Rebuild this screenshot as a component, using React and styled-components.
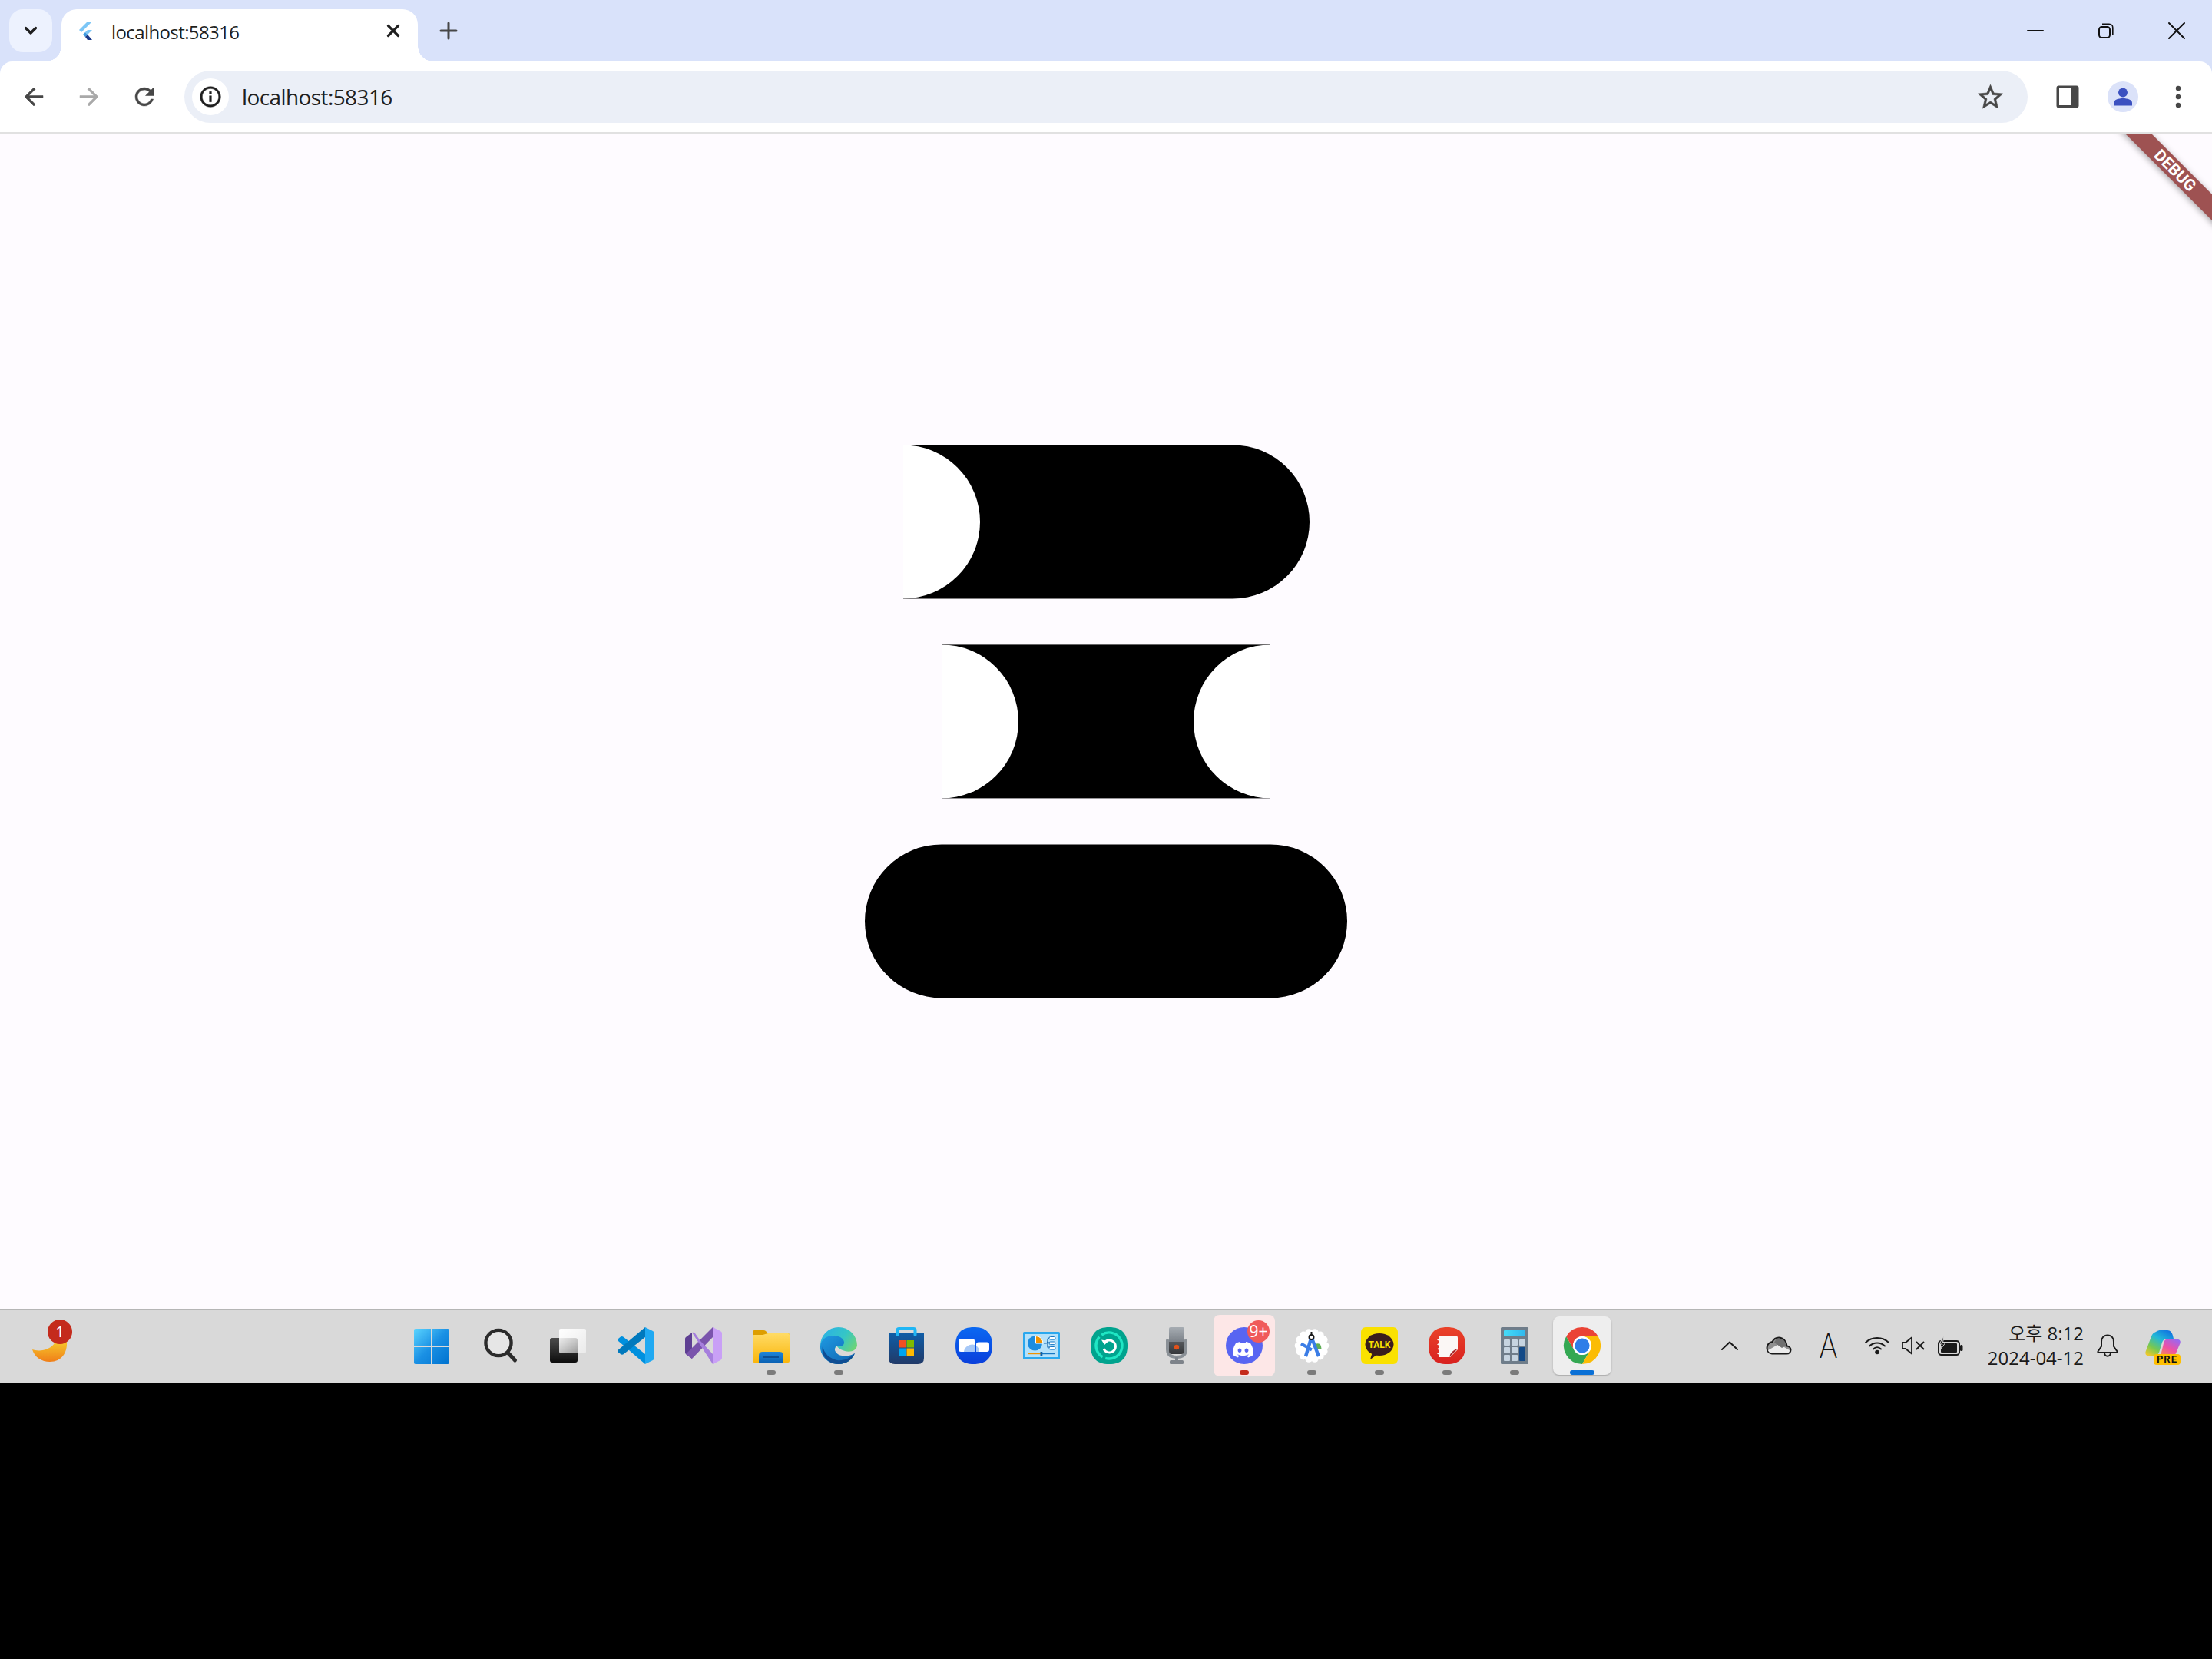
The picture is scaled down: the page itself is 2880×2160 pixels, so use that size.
import React from "react";
import styled, { createGlobalStyle } from "styled-components";

const uiFont = `"Open Sans", "Noto Sans", "Noto Sans CJK KR", sans-serif`;

const GlobalStyle = createGlobalStyle`
  html, body {
    margin: 0;
    padding: 0;
    background: #000;
    font-family: ${uiFont};
  }
`;

const Page = styled.div`
  width: 2880px;
  height: 2160px;
  display: flex;
  flex-direction: column;
  background: #000;
  overflow: hidden;
`;

const Frame = styled.header`
  flex: none;
  background: #d9e2fa;
`;

const TabStrip = styled.div`
  height: 80px;
  display: flex;
  padding-left: 12px;
`;

const TabSearch = styled.div`
  width: 56px;
  height: 56px;
  margin-top: 12px;
  border-radius: 18px;
  background: #edf2fe;
  display: flex;
  align-items: center;
  justify-content: center;
`;

const Tab = styled.div`
  position: relative;
  width: 464px;
  height: 68px;
  margin: 12px 0 0 12px;
  padding: 0 23px 12px 20px;
  box-sizing: border-box;
  display: flex;
  align-items: center;
  background: #fff;
  border-radius: 20px 20px 0 0;

  &::before,
  &::after {
    content: "";
    position: absolute;
    bottom: 0;
    width: 20px;
    height: 20px;
  }
  &::before {
    left: -20px;
    background: radial-gradient(circle at 0 0, transparent 19.5px, #fff 20px);
  }
  &::after {
    right: -20px;
    background: radial-gradient(circle at 100% 0, transparent 19.5px, #fff 20px);
  }
`;

const TabTitle = styled.span`
  flex: 1;
  margin: 3px 0 0 21px;
  font-size: 24px;
  line-height: 32px;
  letter-spacing: -0.6px;
  color: #1f1f1f;
  white-space: nowrap;
`;

const NewTab = styled.div`
  width: 56px;
  height: 56px;
  margin: 12px 0 0 12px;
  display: flex;
  align-items: center;
  justify-content: center;
`;

const WindowButtons = styled.div`
  margin-left: auto;
  display: flex;
  align-items: center;
`;

const WindowButton = styled.div`
  width: 92px;
  height: 80px;
  display: flex;
  align-items: center;
  justify-content: center;
`;

const Toolbar = styled.div`
  height: 94px;
  box-sizing: border-box;
  display: flex;
  align-items: flex-start;
  padding: 12px 8px 0;
  background: #fff;
  border-bottom: 2px solid #e1e1e1;
  border-radius: 16px 16px 0 0;
`;

const ToolButton = styled.div`
  width: 72px;
  height: 68px;
  flex: none;
  display: flex;
  align-items: center;
  justify-content: center;
`;

const Omnibox = styled.div`
  width: 2400px;
  height: 68px;
  flex: none;
  margin: 0 16px;
  padding: 0 29px 0 10px;
  box-sizing: border-box;
  display: flex;
  align-items: center;
  background: #ebeff7;
  border-radius: 34px;
`;

const InfoChip = styled.div`
  width: 48px;
  height: 48px;
  border-radius: 24px;
  background: #fff;
  display: flex;
  align-items: center;
  justify-content: center;
`;

const Url = styled.span`
  flex: 1;
  margin-left: 17px;
  font-size: 28px;
  line-height: 36px;
  letter-spacing: -0.6px;
  color: #1f1f1f;
`;

const Avatar = styled.div`
  width: 40px;
  height: 40px;
  border-radius: 50%;
  background: #dbe2f9;
  display: flex;
  align-items: center;
  justify-content: center;
`;

const Content = styled.main`
  position: relative;
  height: 1530px;
  flex: none;
  display: flex;
  flex-direction: column;
  align-items: center;
  justify-content: center;
  gap: 60px;
  background: #fefbff;
  overflow: hidden;
`;

const Shape = styled.div`
  position: relative;
  width: ${(p) => p.$width}px;
  height: 200px;
  background: #000;
  border-radius: ${(p) => p.$radius};
  overflow: hidden;
  transform: translateY(0.4px);
`;

const Notch = styled.div`
  position: absolute;
  top: 0;
  ${(p) => p.$side}: 0;
  width: 100px;
  height: 200px;
  background: #fff;
  border-radius: ${(p) => (p.$side === "left" ? "0 100px 100px 0" : "100px 0 0 100px")};
`;

const BannerClip = styled.div`
  position: absolute;
  top: 0;
  right: 0;
  width: 140px;
  height: 140px;
  overflow: hidden;
`;

const Banner = styled.div`
  position: absolute;
  left: -18px;
  top: 36px;
  width: 220px;
  height: 24px;
  display: flex;
  align-items: center;
  justify-content: center;
  transform: rotate(45deg);
  background: #9e5252;
  box-shadow: 0 2px 8px rgba(0, 0, 0, 0.35);
  color: #fff;
  font-family: Roboto, sans-serif;
  font-weight: 700;
  font-size: 21px;
  line-height: 24px;
`;

const Taskbar = styled.footer`
  position: relative;
  height: 96px;
  flex: none;
  box-sizing: border-box;
  display: flex;
  background: #d9d9d9;
  border-top: 2px solid #b5b5b5;
`;

const Weather = styled.div`
  position: relative;
  width: 518px;
  flex: none;
  padding: 41px 0 0 42px;
  box-sizing: border-box;
`;

const CountBadge = styled.span`
  position: absolute;
  left: ${(p) => p.$left}px;
  top: ${(p) => p.$top}px;
  width: ${(p) => p.$size}px;
  height: ${(p) => p.$size}px;
  border-radius: 50%;
  background: ${(p) => p.$color};
  color: #fff;
  font-size: ${(p) => p.$font}px;
  line-height: ${(p) => p.$size}px;
  text-align: center;
`;

const Apps = styled.div`
  display: flex;
  flex: none;
`;

const AppSlot = styled.div`
  width: 88px;
  margin-left: ${(p) => (p.$nudge ? 2 : 0)}px;
  display: flex;
  justify-content: center;
`;

const Tile = styled.div`
  position: relative;
  box-sizing: border-box;
  width: ${(p) => (p.$tone === "active" ? 76 : 80)}px;
  height: ${(p) => (p.$tone === "active" ? 76 : 80)}px;
  margin-top: ${(p) => (p.$tone === "active" ? 8 : 6)}px;
  padding-top: ${(p) => (p.$tone === "active" ? 14 : 16)}px;
  display: flex;
  flex-direction: column;
  align-items: center;
  gap: 8px;
  border-radius: 8px;
  background: ${(p) =>
    p.$tone === "active" ? "#eeeeee" : p.$tone === "alert" ? "#fde7e7" : "transparent"};
  box-shadow: ${(p) => (p.$tone === "active" ? "0 1px 2px rgba(0,0,0,0.25)" : "none")};
`;

const RunDot = styled.span`
  flex: none;
  width: ${(p) => (p.$wide ? 32 : 12)}px;
  height: 6px;
  border-radius: 3px;
  background: ${(p) => p.$color};
`;

const Glyph = styled.svg`
  display: block;
  flex: none;
  overflow: visible;
`;

const Tray = styled.div`
  display: flex;
  align-items: center;
  margin-left: 116px;
  height: 92px;
`;

const TraySlot = styled.div`
  width: ${(p) => p.$width}px;
  display: flex;
  justify-content: center;
  align-items: center;
  flex: none;
`;

const ImeLetter = styled.span`
  display: inline-block;
  font-family: Inter, sans-serif;
  font-weight: 200;
  font-size: 44px;
  line-height: 44px;
  color: #111;
  transform: scaleX(0.85);
`;

const Clock = styled.div`
  width: 139px;
  flex: none;
  text-align: right;
  font-size: 24px;
  line-height: 32px;
  color: #1a1a1a;
  white-space: nowrap;
`;

const Copilot = styled.div`
  position: relative;
  width: 46px;
  height: 45px;
  flex: none;
  margin: 5px 0 0 18px;
`;

const PreBadge = styled.span`
  position: absolute;
  right: 0;
  bottom: 0;
  width: 35px;
  height: 14px;
  border-radius: 4px;
  background: #ffbf00;
  color: #111;
  font-family: Roboto, sans-serif;
  font-weight: 700;
  font-size: 13px;
  line-height: 14px;
  letter-spacing: 1px;
  text-align: center;
`;

const squircle = "M24 0C40 0 48 8 48 24C48 40 40 48 24 48C8 48 0 40 0 24C0 8 8 0 24 0Z";

const Mat = ({ d, size, color }) => (
  <Glyph width={size} height={size} viewBox="0 0 24 24">
    <path d={d} fill={color} stroke={color} strokeWidth="0.35" />
  </Glyph>
);

const Line = ({ w, h, color, sw, d }) => (
  <Glyph width={w} height={h} viewBox={`0 0 ${w} ${h}`}>
    <path d={d} fill="none" stroke={color} strokeWidth={sw} strokeLinecap="round" strokeLinejoin="round" />
  </Glyph>
);

const Favicon = () => (
  <Glyph width="24" height="24" viewBox="0 0 24 24">
    <path d="M14 0h6L6 14l-3-3z" fill="#7cc6f6" />
    <path d="M14 11h6l-6 6-3-3z" fill="#7cc6f6" />
    <path d="M8 17l3-3 3 3-3 3z" fill="#3f9be0" />
    <path d="M11 20l3-3 6 7h-6z" fill="#1a3a8a" />
  </Glyph>
);

const chromeIcons = {
  back: "M20 11H7.83l5.59-5.59L12 4l-8 8 8 8 1.41-1.41L7.83 13H20v-2z",
  forward: "M12 4l-1.41 1.41L16.17 11H4v2h12.17l-5.58 5.59L12 20l8-8z",
  reload:
    "M17.65 6.35A7.95 7.95 0 0 0 12 4a8 8 0 1 0 7.73 10h-2.08A6 6 0 1 1 12 6c1.66 0 3.14.69 4.22 1.78L13 11h7V4l-2.35 2.35z",
  info: "M11 7h2v2h-2zm0 4h2v6h-2zm1-9C6.48 2 2 6.48 2 12s4.48 10 10 10 10-4.48 10-10S17.52 2 12 2zm0 18c-4.41 0-8-3.59-8-8s3.59-8 8-8 8 3.59 8 8-3.59 8-8 8z",
  star: "M22 9.24l-7.19-.62L12 2 9.19 8.63 2 9.24l5.46 4.73L5.82 21 12 17.27 18.18 21l-1.63-7.03L22 9.24zM12 15.4l-3.76 2.27 1-4.28-3.32-2.88 4.38-.38L12 6.1l1.71 4.04 4.38.38-3.32 2.88 1 4.28L12 15.4z",
};

const SidePanelIcon = () => (
  <Glyph width="30" height="30" viewBox="0 0 30 30">
    <rect x="0.5" y="0.5" width="29" height="29" rx="3" fill="#474747" />
    <rect x="4" y="4" width="15" height="22" fill="#fff" />
  </Glyph>
);

const PersonIcon = () => (
  <Glyph width="26" height="26" viewBox="0 0 26 26">
    <circle cx="13" cy="7.5" r="6" fill="#3b50c0" />
    <path d="M1 24.5V21c0-4 6-6 12-6s12 2 12 6v3.5z" fill="#3b50c0" />
  </Glyph>
);

const DotsIcon = () => (
  <Glyph width="8" height="30" viewBox="0 0 8 30">
    <circle cx="4" cy="4" r="3.2" fill="#474747" />
    <circle cx="4" cy="15" r="3.2" fill="#474747" />
    <circle cx="4" cy="26" r="3.2" fill="#474747" />
  </Glyph>
);

const RestoreIcon = () => (
  <Glyph width="20" height="20" viewBox="0 0 20 20">
    <rect x="1" y="5" width="14" height="14" rx="3.5" fill="none" stroke="#111" strokeWidth="2" />
    <path d="M5 1.2h9c2.8 0 4.8 2 4.8 4.8v9" fill="none" stroke="#111" strokeWidth="1.6" />
  </Glyph>
);

const MoonIcon = () => (
  <Glyph width="45" height="26" viewBox="0 0 45 26">
    <defs>
      <linearGradient id="moon" x1="0" y1="0" x2="0" y2="1">
        <stop offset="0" stopColor="#f6c62b" />
        <stop offset="1" stopColor="#f07f19" />
      </linearGradient>
    </defs>
    <path d="M0 10C8 13 24 12 30 0L45 0C46 14 38 26 23 26C12 26 3 20 0 10Z" fill="url(#moon)" />
  </Glyph>
);

const WindowsIcon = () => (
  <Glyph width="48" height="48" viewBox="0 0 48 48">
    <defs>
      <linearGradient id="win" gradientUnits="userSpaceOnUse" x1="1" y1="2" x2="47" y2="48">
        <stop offset="0" stopColor="#5ad4ff" />
        <stop offset="0.5" stopColor="#1a90e4" />
        <stop offset="1" stopColor="#0072cf" />
      </linearGradient>
    </defs>
    <g fill="url(#win)">
      <path d="M3 2H23V24H1V4A2 2 0 0 1 3 2Z" />
      <path d="M25 2H45A2 2 0 0 1 47 4V24H25Z" />
      <path d="M1 26H23V48H3A2 2 0 0 1 1 46Z" />
      <path d="M25 26H47V46A2 2 0 0 1 45 48H25Z" />
    </g>
  </Glyph>
);

const SearchIcon = () => (
  <Glyph width="48" height="48" viewBox="0 0 48 48">
    <circle cx="23" cy="20.5" r="16.6" fill="rgba(255,255,255,0.35)" stroke="#2b2b2b" strokeWidth="4.4" />
    <path d="M35 33L44.5 43" stroke="#2b2b2b" strokeWidth="5" strokeLinecap="round" />
  </Glyph>
);

const TaskViewIcon = () => (
  <Glyph width="48" height="48" viewBox="0 0 48 48">
    <defs>
      <linearGradient id="tvDark" x1="0" y1="0" x2="0" y2="1">
        <stop offset="0" stopColor="#4c4c4c" />
        <stop offset="1" stopColor="#0d0d0d" />
      </linearGradient>
      <linearGradient id="tvLight" x1="0" y1="0" x2="1" y2="1">
        <stop offset="0" stopColor="#ffffff" />
        <stop offset="1" stopColor="#ffffff" stopOpacity="0.45" />
      </linearGradient>
    </defs>
    <rect x="2" y="14" width="36" height="32" rx="3" fill="url(#tvDark)" />
    <rect x="14" y="2" width="35" height="32" rx="2" fill="url(#tvLight)" />
  </Glyph>
);

const CodeIcon = () => (
  <Glyph width="48" height="48" viewBox="0 0 48 48">
    <path d="M1 18Q0 16.5 1 15L4 12.5Q6 11.5 8 13L36 35V48Z" fill="#0090de" />
    <path d="M36 0V13L8 35Q6 36.5 4 35L1 32.5Q0 31 1 29.5Z" fill="#0079bd" />
    <path d="M36 0L46 5Q48 6 48 8V40Q48 42 46 43L36 48Z" fill="#20a9f2" />
  </Glyph>
);

const StudioIcon = () => (
  <Glyph width="48" height="48" viewBox="0 0 48 48">
    <path d="M0 15Q0 14 1 13L9 7V41L1 35Q0 34 0 33Z" fill="#5e3f92" />
    <path d="M36 0V13L9 41L1 35Z" fill="#7a54ac" />
    <path d="M9 7L36 48V35L20 18L13 8Q11 6 9 7Z" fill="#a67fdd" />
    <path d="M36 0L46 5Q48 6 48 8V40Q48 42 46 43L36 48Z" fill="#c9a0f6" />
  </Glyph>
);

const FolderIcon = () => (
  <Glyph width="48" height="48" viewBox="0 0 48 48">
    <defs>
      <linearGradient id="folder" x1="0" y1="0" x2="0" y2="1">
        <stop offset="0" stopColor="#ffdb65" />
        <stop offset="1" stopColor="#fab60c" />
      </linearGradient>
      <linearGradient id="pocket" x1="0" y1="0" x2="0" y2="1">
        <stop offset="0" stopColor="#1f86da" />
        <stop offset="1" stopColor="#0a62b4" />
      </linearGradient>
    </defs>
    <path d="M2 4H14Q16 4 17 5L20 8H46Q48 8 48 10V16H0V6Q0 4 2 4Z" fill="#dd9e00" />
    <path d="M0 11Q0 10 2 10H13L20 8H46Q48 8 48 10V44Q48 46 46 46H2Q0 46 0 44Z" fill="url(#folder)" />
    <path d="M13 32H35Q40 32 40 37V46H8V37Q8 32 13 32Z" fill="url(#pocket)" />
    <path d="M14 39H34" stroke="#0b4f94" strokeWidth="2" />
  </Glyph>
);

const EdgeIcon = () => (
  <Glyph width="48" height="48" viewBox="0 0 48 48">
    <defs>
      <linearGradient id="edgeTop" x1="0" y1="0" x2="1" y2="0.7">
        <stop offset="0" stopColor="#2aaeea" />
        <stop offset="0.55" stopColor="#35c6c6" />
        <stop offset="1" stopColor="#7fd85f" />
      </linearGradient>
      <linearGradient id="edgeBlue" x1="0" y1="0" x2="0.8" y2="1">
        <stop offset="0" stopColor="#1f9ae2" />
        <stop offset="1" stopColor="#0f68b4" />
      </linearGradient>
    </defs>
    <circle cx="24" cy="24" r="24" fill="url(#edgeTop)" />
    <path d="M48 24C47 31 39 33 32 31C28 30 24 28 21 24L18 30L24 40H46L52 34V24Z" fill="#dbd9d7" />
    <path
      d="M0 25C1 15 9 11 17 11C27 11 32 17 31 21C30 25 24 26 21 24C19 26 18 29 20 32C23 37 30 38 37 37C40 36.5 43 35 45 34C41 43 33 48 24 48C10 48 0 38 0 25Z"
      fill="url(#edgeBlue)"
    />
    <path d="M12 45C6 41 1 34 3 25C5 34 12 41 22 43C30 44 38 41 45 34C41 43 33 48 24 48C19 48 15 47 12 45Z" fill="#0f4d93" />
  </Glyph>
);

const StoreIcon = () => (
  <Glyph width="48" height="48" viewBox="0 0 48 48">
    <defs>
      <linearGradient id="bag" x1="0" y1="0" x2="0" y2="1">
        <stop offset="0" stopColor="#0f5ea8" />
        <stop offset="1" stopColor="#213a68" />
      </linearGradient>
    </defs>
    <path d="M1 7H47V40Q47 48 39 48H9Q1 48 1 40Z" fill="url(#bag)" />
    <path d="M12.5 10V4Q12.5 2 14.5 2H33.5Q35.5 2 35.5 4V10" fill="none" stroke="#1fb6f5" strokeWidth="4" strokeLinecap="round" />
    <rect x="14" y="17" width="9.5" height="9.5" fill="#f25022" />
    <rect x="24.5" y="17" width="9.5" height="9.5" fill="#7fba00" />
    <rect x="14" y="27.5" width="9.5" height="9.5" fill="#00a4ef" />
    <rect x="24.5" y="27.5" width="9.5" height="9.5" fill="#ffb900" />
  </Glyph>
);

const MeetIcon = () => (
  <Glyph width="48" height="48" viewBox="0 0 48 48">
    <defs>
      <linearGradient id="meet" x1="0" y1="0" x2="0" y2="1">
        <stop offset="0" stopColor="#0a68f2" />
        <stop offset="1" stopColor="#0a3fdb" />
      </linearGradient>
    </defs>
    <path d={squircle} fill="url(#meet)" />
    <rect x="4" y="15" width="21" height="17" rx="3" fill="#fff" />
    <rect x="27" y="19.5" width="17" height="12.5" rx="3" fill="#fff" />
    <path d="M11 32A11 10 0 0 1 25 23V32Z" fill="#a6c8f7" />
    <path d="M27 24A11 10 0 0 1 31 32H27Z" fill="#a6c8f7" />
  </Glyph>
);

const ControlPanelIcon = () => (
  <Glyph width="48" height="48" viewBox="0 0 48 48">
    <rect x="0" y="6" width="48" height="36" rx="1.5" fill="#2ba8ee" />
    <rect x="3" y="9" width="42" height="30" fill="#b5e1fa" />
    <circle cx="15.5" cy="21" r="9.5" fill="#1b8de0" />
    <path d="M16.5 11.5A9.5 9.5 0 0 1 26 21H16.5Z" fill="#f09200" stroke="#fff" strokeWidth="1" />
    <path d="M27 21H30Q32 21 32 18V16Q32 14 35 14" fill="none" stroke="#0d5fa8" strokeWidth="1.2" />
    <path d="M32 20H36M32 20V26H36" fill="none" stroke="#0d5fa8" strokeWidth="1.2" />
    <rect x="34" y="12.5" width="8" height="3.6" rx="1.6" fill="#fff" stroke="#1577c4" />
    <rect x="34" y="19" width="8" height="3.6" rx="1.6" fill="#fff" stroke="#1577c4" />
    <rect x="34" y="25.5" width="8" height="3.6" rx="1.6" fill="#fff" stroke="#1577c4" />
    <path d="M6 34.5H23" stroke="#f09200" strokeWidth="1.4" />
    <path d="M25 34.5H42" stroke="#1577c4" strokeWidth="1.4" />
    <rect x="22.5" y="32" width="2.8" height="5" fill="#0d5fa8" />
  </Glyph>
);

const RestoreAppIcon = () => (
  <Glyph width="48" height="48" viewBox="0 0 48 48">
    <path d={squircle} fill="#00a38e" />
    <circle cx="24" cy="24" r="17" fill="none" stroke="#1fe6c4" strokeWidth="3.4" strokeDasharray="52 4 30 4 16 1" transform="rotate(-70 24 24)" />
    <path d="M17.5 21A8 8 0 1 1 17 28" fill="none" stroke="#fff" strokeWidth="3" />
    <path d="M14 16.5L18 23L23.5 18Z" fill="#fff" />
  </Glyph>
);

const MicIcon = () => (
  <Glyph width="48" height="48" viewBox="0 0 48 48">
    <defs>
      <linearGradient id="micTop" x1="0" y1="0" x2="0" y2="1">
        <stop offset="0" stopColor="#a6acb2" />
        <stop offset="1" stopColor="#7b8188" />
      </linearGradient>
      <linearGradient id="micLow" x1="0" y1="0" x2="0" y2="1">
        <stop offset="0" stopColor="#55585c" />
        <stop offset="1" stopColor="#35373a" />
      </linearGradient>
    </defs>
    <path d="M12 17V29Q12 39 24 39Q36 39 36 29V17" fill="none" stroke="#8a9096" strokeWidth="4" strokeLinecap="round" />
    <path d="M14 2Q14 0 16 0H32Q34 0 34 2V19H14Z" fill="url(#micTop)" />
    <path d="M14 19H34V31Q34 35 30 35H18Q14 35 14 31Z" fill="url(#micLow)" />
    <circle cx="24" cy="26" r="3.2" fill="#e2521b" />
    <path d="M24 39V44" stroke="#7d838a" strokeWidth="4" />
    <rect x="15" y="43" width="18" height="5" rx="1.5" fill="#7d838a" />
  </Glyph>
);

const DiscordIcon = () => (
  <Glyph width="48" height="48" viewBox="0 0 48 48">
    <circle cx="24" cy="24" r="24" fill="#5865f2" />
    <g transform="translate(9 19) scale(0.2126)">
      <path
        fill="#fff"
        d="M107.7,8.07A105.15,105.15,0,0,0,81.47,0a72.06,72.06,0,0,0-3.36,6.83A97.68,97.68,0,0,0,49,6.83,72.37,72.37,0,0,0,45.64,0,105.89,105.89,0,0,0,19.39,8.09C2.79,32.65-1.71,56.6.54,80.21h0A105.73,105.73,0,0,0,32.71,96.36,77.7,77.7,0,0,0,39.6,85.25a68.42,68.42,0,0,1-10.85-5.18c.91-.66,1.8-1.34,2.66-2a75.57,75.57,0,0,0,64.32,0c.87.71,1.76,1.39,2.66,2a68.68,68.68,0,0,1-10.87,5.19,77,77,0,0,0,6.89,11.1A105.25,105.25,0,0,0,126.6,80.22h0C129.24,52.84,122.09,29.11,107.7,8.07ZM42.45,65.69C36.18,65.69,31,60,31,53s5-12.74,11.43-12.74S54,46,53.89,53,48.84,65.69,42.45,65.69Zm42.24,0C78.41,65.69,73.25,60,73.25,53s5-12.74,11.44-12.74S96.23,46,96.12,53,91.08,65.69,84.69,65.69Z"
      />
    </g>
  </Glyph>
);

const scallops = Array.from({ length: 14 }, (_, i) => (i * Math.PI * 2) / 14);

const AndroidStudioIcon = () => (
  <Glyph width="48" height="48" viewBox="0 0 48 48">
    <circle cx="24" cy="24" r="19" fill="#fff" />
    {scallops.map((a) => (
      <circle key={a} cx={24 + 17.5 * Math.cos(a)} cy={24 + 17.5 * Math.sin(a)} r="4.8" fill="#fff" />
    ))}
    <path d="M29 22a4.5 4.5 0 0 1 7 3l.5 3h-6z" fill="#5fae57" />
    <path d="M23.5 13L16 38M23.5 13L33 38" stroke="#3b7de6" strokeWidth="4.4" fill="none" />
    <path d="M10 21.5L24 29.5" stroke="#3b7de6" strokeWidth="4" fill="none" />
    <circle cx="23.5" cy="13" r="3" fill="#fff" stroke="#1a1a1a" strokeWidth="2" />
    <path d="M23.5 6V10" stroke="#1a1a1a" strokeWidth="2" />
  </Glyph>
);

const TalkIcon = () => (
  <Glyph width="48" height="48" viewBox="0 0 48 48">
    <rect width="48" height="48" rx="6" fill="#fae100" />
    <ellipse cx="24" cy="22.5" rx="18.5" ry="14.5" fill="#3a1d1d" />
    <path d="M15 32L12 42L22 35Z" fill="#3a1d1d" />
    <text
      x="24"
      y="27"
      textAnchor="middle"
      fontFamily="Roboto, sans-serif"
      fontWeight="700"
      fontSize="12"
      fill="#fae100"
    >
      TALK
    </text>
  </Glyph>
);

const NotesIcon = () => (
  <Glyph width="48" height="48" viewBox="0 0 48 48">
    <defs>
      <linearGradient id="notes" x1="0" y1="0" x2="0" y2="1">
        <stop offset="0" stopColor="#ea4229" />
        <stop offset="1" stopColor="#d8211f" />
      </linearGradient>
    </defs>
    <path d={squircle} fill="url(#notes)" />
    <path
      d="M13 11H35Q38 11 38 14V29L28 39H13V35.5L11 34.5L13 33V29.5L11 28.5L13 27V23.5L11 22.5L13 21V17.5L11 16.5L13 15Z"
      fill="#fbf7f5"
    />
    <path d="M38 28L27 39Q28 31 38 28Z" fill="#a8262a" />
  </Glyph>
);

const CalculatorIcon = () => (
  <Glyph width="48" height="48" viewBox="0 0 48 48">
    <defs>
      <linearGradient id="calcScreen" x1="0" y1="0" x2="1" y2="0">
        <stop offset="0" stopColor="#45dcf8" />
        <stop offset="1" stopColor="#2fb8ee" />
      </linearGradient>
    </defs>
    <rect x="6" y="0" width="36" height="48" rx="1.5" fill="#6f7d8a" />
    <rect x="10" y="4" width="28" height="8" rx="1" fill="url(#calcScreen)" />
    {[10, 20, 30].map((x) =>
      [16, 26, 36].map((y) =>
        x === 30 && y > 16 ? null : (
          <rect key={`${x}-${y}`} x={x} y={y} width="8" height="8" rx="1" fill="#c6d4e0" />
        )
      )
    )}
    <rect x="30" y="26" width="8" height="18" rx="1" fill="#134a87" />
  </Glyph>
);

const ChromeIcon = () => (
  <Glyph width="48" height="48" viewBox="0 0 48 48">
    <path d="M3.2 12L13.6 30A12 12 0 0 0 34.4 30L24 48A24 24 0 0 1 3.2 12Z" fill="#34a853" />
    <path d="M24 12H44.8A24 24 0 0 1 24 48L34.4 30A12 12 0 0 0 24 12Z" fill="#fbbc04" />
    <path d="M3.2 12A24 24 0 0 1 44.8 12H24A12 12 0 0 0 13.6 30Z" fill="#ea4335" />
    <circle cx="24" cy="24" r="12" fill="#fff" />
    <circle cx="24" cy="24" r="9.6" fill="#2f7ee8" />
  </Glyph>
);

const CloudIcon = () => (
  <Glyph width="34" height="24" viewBox="0 0 34 24">
    <path
      d="M8 22.5H27C30.5 22.5 32.5 20 32.5 17.5C32.5 14.5 30 12.5 27.5 12.5C27 6.5 22.5 1.5 17 1.5C12.5 1.5 10 4 8.5 7C4.5 7.5 1.5 11 1.5 15C1.5 19.5 4.5 22.5 8 22.5Z"
      fill="#8f8f8f"
      stroke="#1a1a1a"
      strokeWidth="2"
    />
    <path d="M3 18L17 10L31 18Q31 21.5 27 21.5H8Q4 21.5 3 18Z" fill="#ececec" />
    <path d="M17 2.5C22 2.5 26 6.5 26.5 12L21 15L11 8Q13 3 17 2.5Z" fill="#6f6f6f" />
  </Glyph>
);

const WifiIcon = () => (
  <Glyph width="34" height="24" viewBox="0 0 34 24">
    <g fill="none" stroke="#1a1a1a" strokeWidth="2" strokeLinecap="round">
      <path d="M2 8C10 0 24 0 32 8" />
      <path d="M7 12.5C12.5 7 21.5 7 27 12.5" />
      <path d="M12 16.5C15 13.5 19 13.5 22 16.5" />
    </g>
    <circle cx="17" cy="20.5" r="2.8" fill="#1a1a1a" />
  </Glyph>
);

const MuteIcon = () => (
  <Glyph width="30" height="24" viewBox="0 0 30 24">
    <g fill="none" stroke="#1a1a1a" strokeWidth="1.8" strokeLinejoin="round">
      <path d="M1 8H5L13 1.5V22.5L5 16H1Z" />
      <path d="M19 7L29 17M29 7L19 17" />
    </g>
  </Glyph>
);

const BatteryIcon = () => (
  <Glyph width="34" height="26" viewBox="0 0 34 26">
    <rect x="1" y="7" width="27" height="18" rx="3.5" fill="none" stroke="#1a1a1a" strokeWidth="2" />
    <rect x="4" y="10" width="21" height="12" rx="1" fill="#1a1a1a" />
    <rect x="29" y="12" width="3.5" height="8" rx="1.5" fill="#1a1a1a" />
    <path d="M8 0L2 11H6L3 19L10 9H6.5Z" fill="#1a1a1a" stroke="#d9d9d9" strokeWidth="1" />
  </Glyph>
);

const BellIcon = () => (
  <Glyph width="28" height="30" viewBox="0 0 28 30">
    <path
      d="M14 1.5C8.5 1.5 6 5.5 6 10V16L1.5 22.5Q1 24 2.5 24H25.5Q27 24 26.5 22.5L22 16V10C22 5.5 19.5 1.5 14 1.5Z"
      fill="none"
      stroke="#1a1a1a"
      strokeWidth="2"
      strokeLinejoin="round"
    />
    <path d="M10 24.5C10 30 18 30 18 24.5" fill="none" stroke="#1a1a1a" strokeWidth="2" />
  </Glyph>
);

const CopilotIcon = () => (
  <Glyph width="46" height="36" viewBox="0 0 46 36">
    <defs>
      <linearGradient id="copLeft" x1="0.75" y1="0" x2="0.1" y2="1">
        <stop offset="0" stopColor="#1278e0" />
        <stop offset="0.35" stopColor="#22b8d8" />
        <stop offset="0.7" stopColor="#78c850" />
        <stop offset="1" stopColor="#f2c92c" />
      </linearGradient>
      <linearGradient id="copRight" x1="0.8" y1="0" x2="0.2" y2="1">
        <stop offset="0" stopColor="#9a68f0" />
        <stop offset="0.55" stopColor="#ee50a6" />
        <stop offset="1" stopColor="#f58a5a" />
      </linearGradient>
    </defs>
    <path
      d="M14 2C16 .5 18 0 20 0H29C33 0 35 3 36 7L37 11H28C25 11 23 13 22 16L18 29C17 31 15 33 11 33H4C1 33 0 31 .5 28L8 8C9 5 11 3 14 2Z"
      fill="url(#copLeft)"
    />
    <path
      d="M27 12H42C45 12 46.5 14 45.5 17L40 30C38.5 33 36 34 33 34H24C21 34 20 32 21 29L24 17C25 14 25 13 27 12Z"
      fill="url(#copRight)"
    />
  </Glyph>
);

const apps = [
  { id: "start", Icon: WindowsIcon },
  { id: "search", Icon: SearchIcon },
  { id: "tasks", Icon: TaskViewIcon },
  { id: "code", Icon: CodeIcon, nudge: true },
  { id: "studio", Icon: StudioIcon },
  { id: "files", Icon: FolderIcon, dot: "#7b7b7b" },
  { id: "edge", Icon: EdgeIcon, dot: "#7b7b7b" },
  { id: "store", Icon: StoreIcon },
  { id: "meet", Icon: MeetIcon },
  { id: "panel", Icon: ControlPanelIcon },
  { id: "restore", Icon: RestoreAppIcon },
  { id: "mic", Icon: MicIcon },
  { id: "discord", Icon: DiscordIcon, dot: "#c42b1c", tone: "alert", count: "9+" },
  { id: "android", Icon: AndroidStudioIcon, dot: "#7b7b7b" },
  { id: "talk", Icon: TalkIcon, dot: "#7b7b7b" },
  { id: "notes", Icon: NotesIcon, dot: "#7b7b7b" },
  { id: "calc", Icon: CalculatorIcon, dot: "#7b7b7b" },
  { id: "chrome", Icon: ChromeIcon, dot: "#0a70d6", tone: "active", wide: true },
];

export default function App() {
  return (
    <Page>
      <GlobalStyle />
      <Frame>
        <TabStrip>
          <TabSearch>
            <Line w={18} h={12} color="#1f1f1f" sw={3.4} d="M2.5 2.5L9 9L15.5 2.5" />
          </TabSearch>
          <Tab>
            <Favicon />
            <TabTitle>localhost:58316</TabTitle>
            <Line w={18} h={16} color="#1f1f1f" sw={3.2} d="M2.5 1.5L15.5 14.5M15.5 1.5L2.5 14.5" />
          </Tab>
          <NewTab>
            <Line w={20} h={20} color="#474747" sw={3} d="M10 0V20M0 10H20" />
          </NewTab>
          <WindowButtons>
            <WindowButton>
              <Line w={20} h={2} color="#111" sw={2} d="M0 1H20" />
            </WindowButton>
            <WindowButton>
              <RestoreIcon />
            </WindowButton>
            <WindowButton>
              <Line w={20} h={20} color="#111" sw={2} d="M0 0L20 20M20 0L0 20" />
            </WindowButton>
          </WindowButtons>
        </TabStrip>
        <Toolbar>
          <ToolButton>
            <Mat d={chromeIcons.back} size={36} color="#474747" />
          </ToolButton>
          <ToolButton>
            <Mat d={chromeIcons.forward} size={36} color="#a9a9a9" />
          </ToolButton>
          <ToolButton>
            <Mat d={chromeIcons.reload} size={36} color="#474747" />
          </ToolButton>
          <Omnibox>
            <InfoChip>
              <Mat d={chromeIcons.info} size={32} color="#1f1f1f" />
            </InfoChip>
            <Url>localhost:58316</Url>
            <Mat d={chromeIcons.star} size={39} color="#474747" />
          </Omnibox>
          <ToolButton>
            <SidePanelIcon />
          </ToolButton>
          <ToolButton>
            <Avatar>
              <PersonIcon />
            </Avatar>
          </ToolButton>
          <ToolButton>
            <DotsIcon />
          </ToolButton>
        </Toolbar>
      </Frame>

      <Content>
        <Shape $width={529} $radius="0 100px 100px 0">
          <Notch $side="left" />
        </Shape>
        <Shape $width={428} $radius="0">
          <Notch $side="left" />
          <Notch $side="right" />
        </Shape>
        <Shape $width={628} $radius="100px" />
        <BannerClip>
          <Banner>DEBUG</Banner>
        </BannerClip>
      </Content>

      <Taskbar>
        <Weather>
          <MoonIcon />
          <CountBadge $left={62} $top={12} $size={32} $color="#c42b1c" $font={20}>
            1
          </CountBadge>
        </Weather>
        <Apps>
          {apps.map(({ id, Icon, dot, tone, wide, count, nudge }) => (
            <AppSlot key={id} $nudge={nudge}>
              <Tile $tone={tone}>
                <Icon />
                {dot && <RunDot $color={dot} $wide={wide} />}
                {count && (
                  <CountBadge $left={44} $top={7} $size={29} $color="#f05a5a" $font={21}>
                    {count}
                  </CountBadge>
                )}
              </Tile>
            </AppSlot>
          ))}
        </Apps>
        <Tray>
          <TraySlot $width={64}>
            <Line w={22} h={12} color="#1a1a1a" sw={2} d="M1 11L11 1.5L21 11" />
          </TraySlot>
          <TraySlot $width={64}>
            <CloudIcon />
          </TraySlot>
          <TraySlot $width={64}>
            <ImeLetter>A</ImeLetter>
          </TraySlot>
          <TraySlot $width={64}>
            <WifiIcon />
          </TraySlot>
          <TraySlot $width={30}>
            <MuteIcon />
          </TraySlot>
          <TraySlot $width={68}>
            <BatteryIcon />
          </TraySlot>
          <Clock>
            <div>오후 8:12</div>
            <div>2024-04-12</div>
          </Clock>
          <TraySlot $width={62}>
            <BellIcon />
          </TraySlot>
          <Copilot>
            <CopilotIcon />
            <PreBadge>PRE</PreBadge>
          </Copilot>
        </Tray>
      </Taskbar>
    </Page>
  );
}
